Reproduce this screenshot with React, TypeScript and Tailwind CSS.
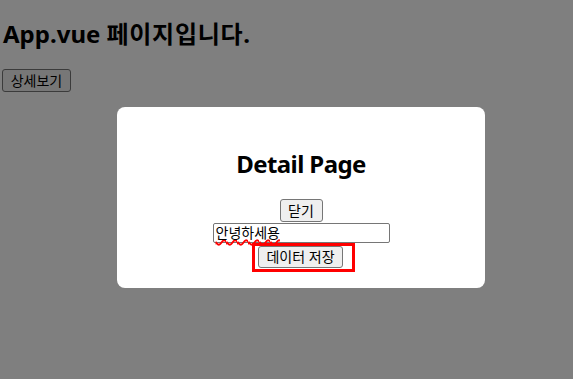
export default function App() {
  return (
    <div className="relative h-[379px] w-full overflow-hidden bg-white font-['Noto_Sans','Noto_Sans_CJK_KR',sans-serif] text-black">
      {/* 페이지 본문 */}
      <h1 className="pl-[3px] pt-[22px] text-[24px] font-bold leading-[24px]">
        App.vue <span className="tracking-[0.7px]">페이지입니다.</span>
      </h1>
      <button className="ml-[2px] mt-[23px] flex h-[23px] w-[69px] items-center justify-center rounded-[3px] border border-[#767676] bg-[#efefef] text-[14px] leading-none">
        상세보기
      </button>

      {/* 모달 */}
      <div className="absolute inset-0 bg-[rgba(0,0,0,0.5)] pl-[117px] pt-[107px]">
        <div className="flex h-[181px] w-[368px] flex-col items-center rounded-[8px] bg-white pt-[45px]">
          <h2 className="text-[24px] font-bold leading-[24px] tracking-[-0.6px]">Detail Page</h2>
          <button className="mt-[23px] flex h-[23px] w-[43px] items-center justify-center rounded-[3px] border border-[#767676] bg-[#efefef] text-[14px] leading-none">
            닫기
          </button>
          <div className="mt-[1px] flex h-[20px] w-[177px] items-center rounded-[2px] border border-[#767676] px-[2px] text-[14px] leading-[16px]">
            <span className="underline decoration-[#ff0000] decoration-wavy decoration-[1.5px] underline-offset-[1px] [text-decoration-skip-ink:none]">
              안녕하세용
            </span>
          </div>
          <div className="ml-[5px] flex border-[3px] border-[#ff0000] pb-[1px] pl-[3px] pr-[9px]">
            <button className="flex h-[22px] w-[85px] items-center justify-center rounded-[3px] border border-[#767676] bg-[#efefef] text-[14px] leading-none">
              데이터 저장
            </button>
          </div>
        </div>
      </div>
    </div>
  )
}
